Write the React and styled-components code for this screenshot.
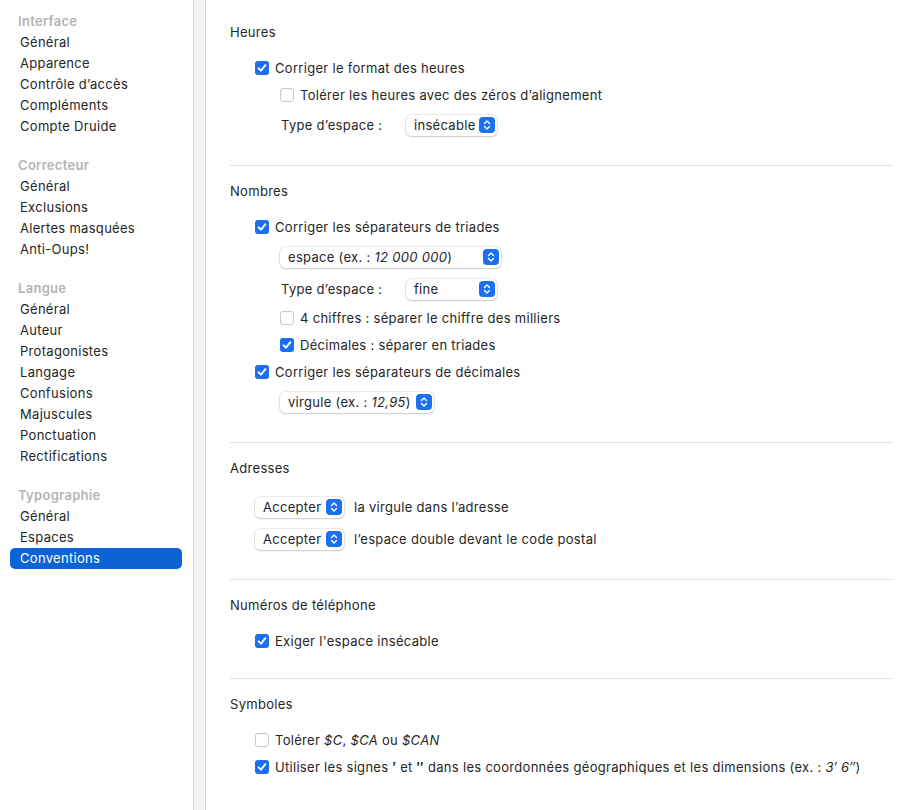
import React from 'react';
import styled, { createGlobalStyle } from 'styled-components';

// #region Styled Components

const GlobalStyle = createGlobalStyle`
  html, body, #root {
    height: 100%;
  }
  body {
    margin: 0;
    background: #ffffff;
    font-family: Inter, "Liberation Sans", Arial, sans-serif;
    font-size: 13px;
    letter-spacing: 0.3px;
    color: #262626;
  }
`;

const Window = styled.div`
  display: flex;
  height: 100%;
`;

const Sidebar = styled.nav`
  width: 193px;
  flex-shrink: 0;
  padding-top: 11px;
  display: flex;
  flex-direction: column;
  gap: 18px;
`;

const Group = styled.div`
  display: flex;
  flex-direction: column;
`;

const GroupTitle = styled.div`
  height: 21px;
  line-height: 21px;
  padding-left: 18px;
  color: #b4b4b4;
  font-weight: 600;
`;

const NavItem = styled.div`
  height: 21px;
  line-height: 21px;
  margin: 0 11px 0 10px;
  padding-left: 10px;
  border-radius: 5px;
  background: ${(p) => (p.$active ? '#0b63d6' : 'transparent')};
  color: ${(p) => (p.$active ? '#ffffff' : '#262626')};
`;

const Splitter = styled.div`
  width: 11px;
  flex-shrink: 0;
  background: #f4f4f4;
  border-left: 1px solid #d6d6d6;
  border-right: 1px solid #d6d6d6;
`;

const Main = styled.main`
  flex: 1;
  padding: 22px 26px 0 24px;
`;

const Section = styled.section`
  display: flex;
  flex-direction: column;
  gap: 5px;
  padding: ${(p) => (p.$first ? '0' : '15px')} 0 ${(p) => (p.$tight ? '26px' : '27px')};
  border-bottom: ${(p) => (p.$last ? 'none' : '1px solid #e2e2e2')};
`;

const SectionTitle = styled.div`
  height: 20px;
  line-height: 20px;
  margin-bottom: 10px;
`;

const Row = styled.div`
  display: flex;
  align-items: center;
  box-sizing: border-box;
  height: ${(p) => (p.$select ? '27px' : '22px')};
  padding-top: ${(p) => (p.$select ? '1px' : '0')};
  padding-left: ${(p) => 25 + (p.$level || 0) * 25}px;
  white-space: nowrap;
`;

const Box = styled.span`
  width: 14px;
  height: 14px;
  box-sizing: border-box;
  border-radius: 3px;
  margin-right: 6px;
  display: inline-flex;
  align-items: center;
  justify-content: center;
  flex-shrink: 0;
  background: ${(p) => (p.$checked ? '#1b6ff0' : '#ffffff')};
  border: ${(p) => (p.$checked ? 'none' : '1px solid #c9c9c9')};
  box-shadow: ${(p) => (p.$checked ? 'none' : 'inset 0 1px 1px rgba(0,0,0,0.04)')};
`;

const Label = styled.span`
  width: ${(p) => p.$width}px;
  padding-left: 1px;
  flex-shrink: 0;
`;

const Popup = styled.div`
  width: ${(p) => p.$width}px;
  height: 21px;
  box-sizing: border-box;
  display: flex;
  align-items: center;
  justify-content: space-between;
  padding: 0 2px 0 8px;
  border-radius: 5px;
  background: #ffffff;
  box-shadow: 0 0 0 0.5px rgba(0, 0, 0, 0.16), 0 1px 2px rgba(0, 0, 0, 0.14);
  flex-shrink: 0;
`;

const Arrows = styled.span`
  width: 16px;
  height: 16px;
  border-radius: 4px;
  background: #1b6ff0;
  display: inline-flex;
  align-items: center;
  justify-content: center;
`;

const After = styled.span`
  margin-left: 10px;
`;

const Prime = styled.b`
  font-weight: 700;
`;

// #endregion Styled Components

const sidebarGroups = [
  { title: 'Interface', items: ['Général', 'Apparence', 'Contrôle d’accès', 'Compléments', 'Compte Druide'] },
  { title: 'Correcteur', items: ['Général', 'Exclusions', 'Alertes masquées', 'Anti-Oups!'] },
  { title: 'Langue', items: ['Général', 'Auteur', 'Protagonistes', 'Langage', 'Confusions', 'Majuscules', 'Ponctuation', 'Rectifications'] },
  { title: 'Typographie', items: ['Général', 'Espaces', 'Conventions'] },
];

const Check = ({ checked, children, level }) => (
  <Row $level={level}>
    <Box $checked={checked}>
      {checked ? (
        <svg width="10" height="10" viewBox="0 0 10 10">
          <path d="M1.6 5.3 L4 7.7 L8.4 2.2" fill="none" stroke="#fff" strokeWidth="1.9" strokeLinecap="round" strokeLinejoin="round" />
        </svg>
      ) : null}
    </Box>
    <span>{children}</span>
  </Row>
);

const Select = ({ width, children }) => (
  <Popup $width={width}>
    <span>{children}</span>
    <Arrows>
      <svg width="8" height="12" viewBox="0 0 8 12">
        <path d="M1.5 4.5 L4 2 L6.5 4.5 M1.5 7.5 L4 10 L6.5 7.5" fill="none" stroke="#fff" strokeWidth="1.4" strokeLinecap="round" strokeLinejoin="round" />
      </svg>
    </Arrows>
  </Popup>
);

const App = () => {
  return (
    <>
      <GlobalStyle />
      <Window>
        <Sidebar>
          {sidebarGroups.map((group) => (
            <Group key={group.title}>
              <GroupTitle>{group.title}</GroupTitle>
              {group.items.map((item) => (
                <NavItem key={item} $active={item === 'Conventions'}>{item}</NavItem>
              ))}
            </Group>
          ))}
        </Sidebar>
        <Splitter />
        <Main>
          <Section $first>
            <SectionTitle>Heures</SectionTitle>
            <Check checked>Corriger le format des heures</Check>
            <Check level={1}>Tolérer les heures avec des zéros d’alignement</Check>
            <Row $select $level={1}>
              <Label $width={125}>Type d’espace :</Label>
              <Select width={91}>insécable</Select>
            </Row>
          </Section>

          <Section>
            <SectionTitle>Nombres</SectionTitle>
            <Check checked>Corriger les séparateurs de triades</Check>
            <Row $select $level={1}>
              <Select width={221}>espace (ex. : <i>12 000 000</i>)</Select>
            </Row>
            <Row $select $level={1}>
              <Label $width={125}>Type d’espace :</Label>
              <Select width={91}>fine</Select>
            </Row>
            <Check level={1}>4 chiffres : séparer le chiffre des milliers</Check>
            <Check checked level={1}>Décimales : séparer en triades</Check>
            <Check checked>Corriger les séparateurs de décimales</Check>
            <Row $select $level={1}>
              <Select width={154}>virgule (ex. : <i>12,95</i>)</Select>
            </Row>
          </Section>

          <Section>
            <SectionTitle>Adresses</SectionTitle>
            <Row $select>
              <Select width={89}>Accepter</Select>
              <After>la virgule dans l’adresse</After>
            </Row>
            <Row $select>
              <Select width={89}>Accepter</Select>
              <After>l’espace double devant le code postal</After>
            </Row>
          </Section>

          <Section $tight>
            <SectionTitle>Numéros de téléphone</SectionTitle>
            <Check checked>Exiger l'espace insécable</Check>
          </Section>

          <Section $last>
            <SectionTitle>Symboles</SectionTitle>
            <Check>Tolérer <i>$C</i>, <i>$CA</i> ou <i>$CAN</i></Check>
            <Check checked>
              Utiliser les signes <Prime>′</Prime> et <Prime>″</Prime> dans les coordonnées géographiques et les dimensions (ex. : <i>3′ 6″</i>)
            </Check>
          </Section>
        </Main>
      </Window>
    </>
  );
};

export default App;
